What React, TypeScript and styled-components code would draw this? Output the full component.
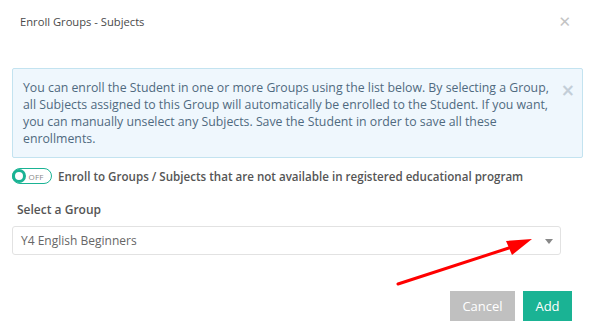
import styled, { createGlobalStyle } from 'styled-components'

const GlobalStyle = createGlobalStyle`
  html, body {
    margin: 0;
    padding: 0;
    background: #fff;
  }
  body {
    font-family: "Open Sans", "Liberation Sans", sans-serif;
    color: #555;
  }
`

const Modal = styled.div`
  position: relative;
  width: 595px;
  height: 336px;
  box-sizing: border-box;
`

const Header = styled.div`
  display: flex;
  align-items: flex-start;
  justify-content: space-between;
  height: 68px;
  box-sizing: border-box;
  padding: 13px 24px 0 20px;
`

const Title = styled.h4`
  margin: 0;
  font-size: 11.2px;
  line-height: 18px;
  font-weight: 500;
  color: #4a4a4a;
`

const CloseButton = styled.span<{ $color: string; $size: number; $weight?: number }>`
  font-size: ${p => p.$size}px;
  font-weight: ${p => p.$weight ?? 400};
  line-height: 18px;
  color: ${p => p.$color};
  cursor: pointer;
  font-family: "DejaVu Sans", sans-serif;
`

const Body = styled.div`
  padding: 0 12px;
`

const InfoBox = styled.div`
  position: relative;
  background: #eff7fd;
  border: 1px solid #c3e3f0;
  border-radius: 2px;
  padding: 10px 21px 10px 10px;
  font-size: 12.3px;
  line-height: 17px;
  color: #4f6a80;
`

const InfoClose = styled.div`
  position: absolute;
  top: 12px;
  right: 7px;
`

const ToggleRow = styled.div`
  display: flex;
  align-items: center;
  gap: 6px;
  margin-top: 10px;
`

const Toggle = styled.div`
  display: flex;
  align-items: center;
  width: 40px;
  height: 16px;
  box-sizing: border-box;
  border: 1.5px solid #1ab394;
  border-radius: 9px;
  background: #fff;
`

const Knob = styled.span`
  width: 14px;
  height: 14px;
  box-sizing: border-box;
  border: 3px solid #1ab394;
  border-radius: 50%;
  margin-left: -1.5px;
`

const ToggleText = styled.span`
  font-size: 8px;
  color: #888;
  margin-left: 3px;
  letter-spacing: 0.2px;
`

const Label = styled.label<{ $size?: number }>`
  font-size: ${p => p.$size ?? 12}px;
  font-weight: 600;
  color: #555;
`

const Field = styled.div`
  display: flex;
  flex-direction: column;
  gap: 8px;
  margin-top: 17px;
  margin-left: 5px;
`

const Select = styled.div`
  display: flex;
  align-items: center;
  justify-content: space-between;
  width: 549px;
  height: 29px;
  box-sizing: border-box;
  margin-left: -5px;
  padding: 0 7px 0 8px;
  border: 1px solid #e2e2e2;
  border-radius: 3px;
  font-size: 12px;
  color: #666;
`

const Caret = styled.span`
  width: 0;
  height: 0;
  border-left: 4.5px solid transparent;
  border-right: 4.5px solid transparent;
  border-top: 5px solid #888;
  margin-top: 1px;
`

const Footer = styled.div`
  display: flex;
  justify-content: flex-end;
  gap: 8px;
  margin-top: 36px;
  padding-right: 23px;
`

const Button = styled.button<{ $bg: string; $w: number }>`
  width: ${p => p.$w}px;
  height: 30px;
  border: none;
  border-radius: 0;
  background: ${p => p.$bg};
  color: #fff;
  font-family: "Open Sans", "Liberation Sans", sans-serif;
  font-size: 13px;
`

const Pointer = styled.svg`
  position: absolute;
  left: 395px;
  top: 232px;
`

export default function App() {
  return (
    <Modal>
      <GlobalStyle />
      <Header>
        <Title>Enroll Groups - Subjects</Title>
        <CloseButton $color="#c4c4c4" $size={15}>✕</CloseButton>
      </Header>
      <Body>
        <InfoBox>
          You can enroll the Student in one or more Groups using the list below. By selecting a Group,
          all Subjects assigned to this Group will automatically be enrolled to the Student. If you want,
          you can manually unselect any Subjects. Save the Student in order to save all these
          enrollments.
          <InfoClose>
            <CloseButton $color="#c3ced8" $size={17} $weight={700}>×</CloseButton>
          </InfoClose>
        </InfoBox>
        <ToggleRow>
          <Toggle>
            <Knob />
            <ToggleText>OFF</ToggleText>
          </Toggle>
          <Label $size={11.6}>Enroll to Groups / Subjects that are not available in registered educational program</Label>
        </ToggleRow>
        <Field>
          <Label>Select a Group</Label>
          <Select>
            <span>Y4 English Beginners</span>
            <Caret />
          </Select>
        </Field>
      </Body>
      <Footer>
        <Button $bg="#c0c0c0" $w={65}>Cancel</Button>
        <Button $bg="#1ab394" $w={49}>Add</Button>
      </Footer>
      <Pointer width="145" height="60" viewBox="0 0 145 60">
        <line x1="3" y1="52" x2="120" y2="14" stroke="#ff0000" strokeWidth="3" strokeLinecap="round" />
        <polygon points="137,7 111,9 117,23" fill="#ff0000" />
      </Pointer>
    </Modal>
  )
}
